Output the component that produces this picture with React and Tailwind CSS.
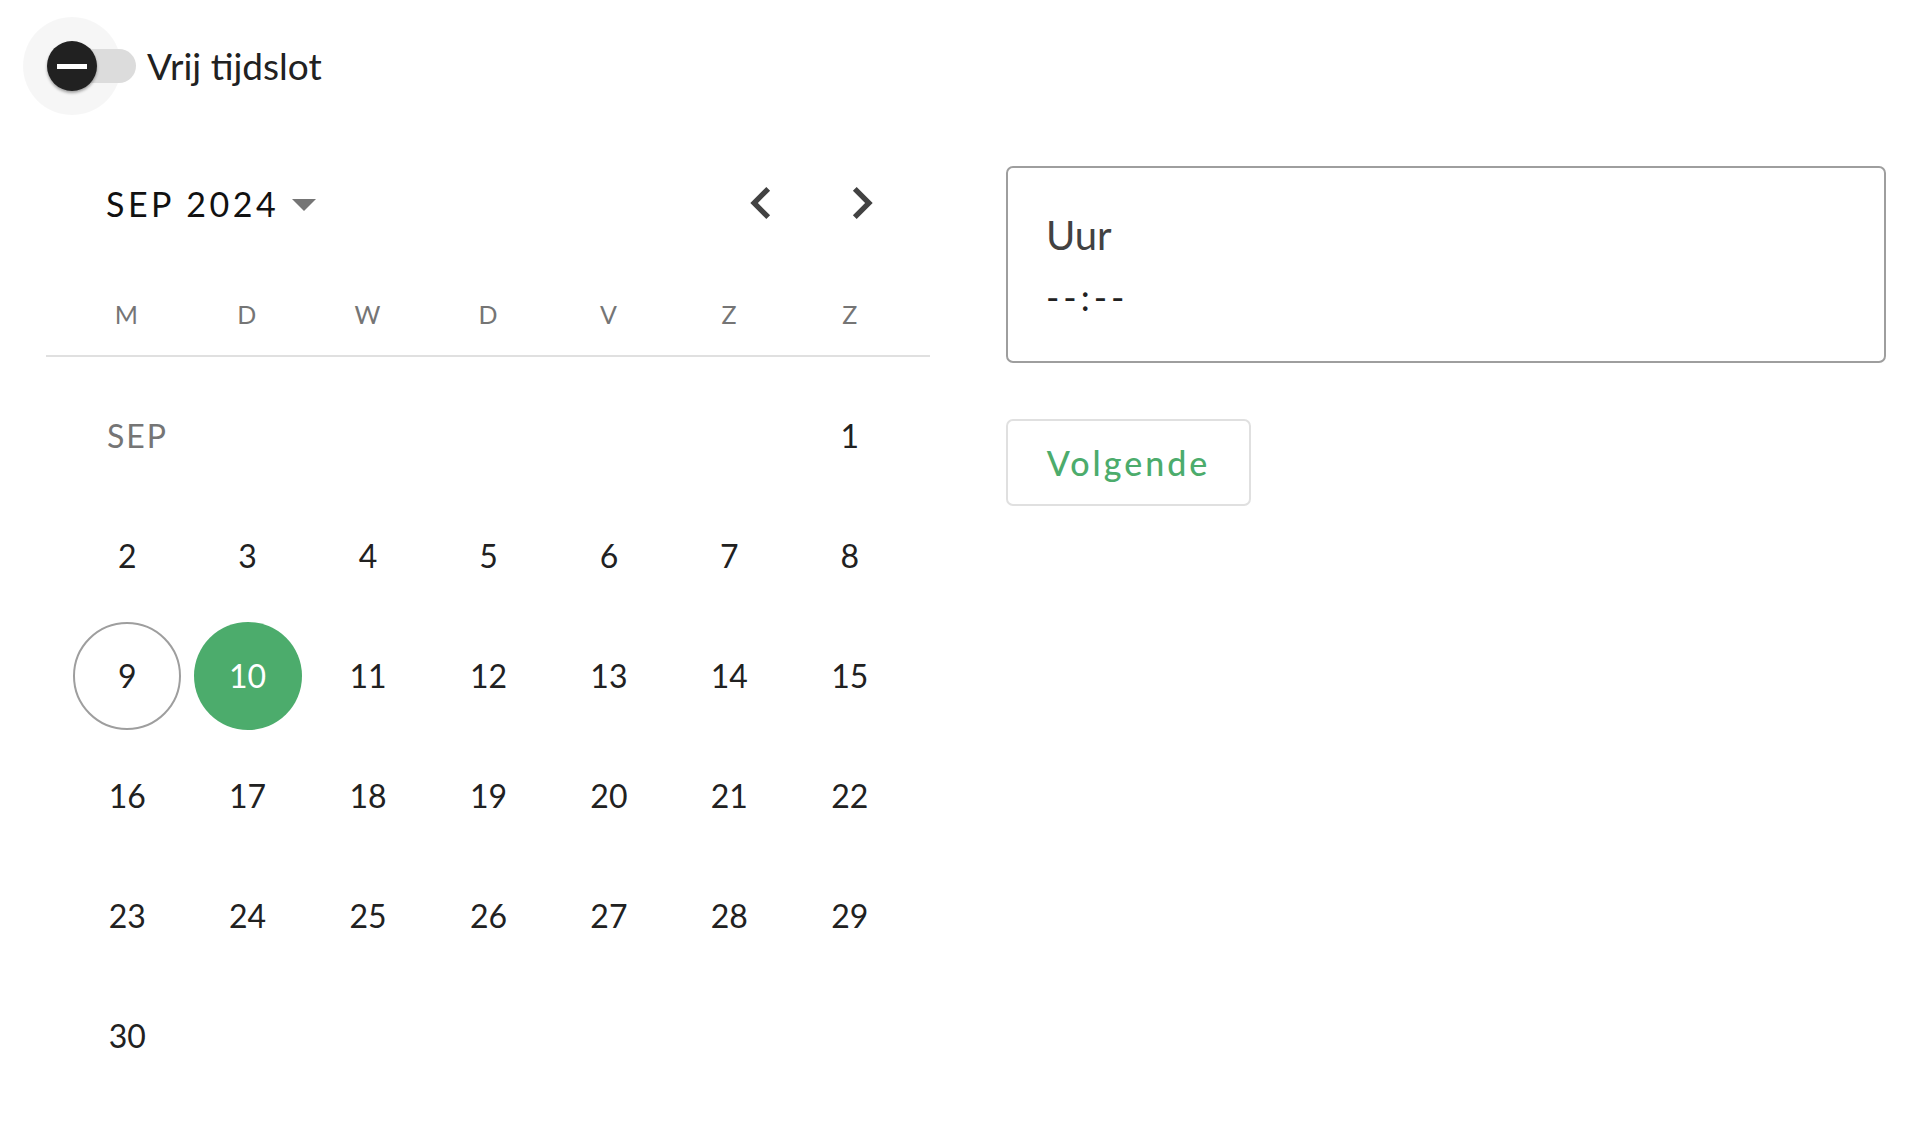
import React from 'react';

const WEEKDAYS = ['M', 'D', 'W', 'D', 'V', 'Z', 'Z'];

// rows after the first one (first row is "SEP" label + 1)
const ROWS = [
  [2, 3, 4, 5, 6, 7, 8],
  [9, 10, 11, 12, 13, 14, 15],
  [16, 17, 18, 19, 20, 21, 22],
  [23, 24, 25, 26, 27, 28, 29],
  [30],
];

const Chevron = ({ dir }) => (
  <svg width="64" height="64" viewBox="0 0 24 24">
    {dir === 'left' ? (
      <path d="M15.41 7.41L14 6l-6 6 6 6 1.41-1.41L10.83 12z" fill="#424242" />
    ) : (
      <path d="M10 6L8.59 7.41 13.17 12l-4.58 4.59L10 18l6-6z" fill="#424242" />
    )}
  </svg>
);

const DayCell = ({ day }) => {
  if (day === 9) {
    return (
      <div className="h-[120px] flex items-center justify-center">
        <div className="w-[108px] h-[108px] rounded-full border-2 border-[#9e9e9e] flex items-center justify-center text-[32px] text-[#212121]">
          {day}
        </div>
      </div>
    );
  }
  if (day === 10) {
    return (
      <div className="h-[120px] flex items-center justify-center">
        <div className="w-[108px] h-[108px] rounded-full bg-[#4cac6c] flex items-center justify-center text-[32px] text-white">
          {day}
        </div>
      </div>
    );
  }
  return (
    <div className="h-[120px] flex items-center justify-center text-[32px] text-[#212121]">
      {day}
    </div>
  );
};

export default function App() {
  return (
    <div className="min-h-screen bg-white font-['Lato','Liberation_Sans',sans-serif]">
      {/* toggle */}
      <div className="h-[132px] flex items-center pl-[23px]">
        <div className="relative w-[98px] h-[98px] shrink-0">
          <div className="absolute inset-0 rounded-full bg-black/[0.035]" />
          <div className="absolute left-[28px] top-[32px] w-[85px] h-[34px] rounded-full bg-[#dcdcdc]" />
          <div className="absolute left-[24px] top-[24px] w-[50px] h-[50px] rounded-full bg-[#212121] shadow-[0_2px_3px_rgba(0,0,0,0.35)] flex items-center justify-center">
            <div className="w-[30px] h-[5px] bg-white" />
          </div>
        </div>
        <span className="ml-[26px] text-[37px] text-[#212121]">Vrij tijdslot</span>
      </div>

      <div className="flex pt-[28px] pr-[30px]">
        {/* calendar */}
        <div className="w-[884px] ml-[46px] shrink-0">
          <div className="h-[86px] flex items-center justify-between pl-[60px] pr-[36px]">
            <div className="flex items-center">
              <span className="text-[34px] tracking-[3.5px] text-[#111]">SEP 2024</span>
              <svg width="26" height="14" viewBox="0 0 26 14" className="ml-[12px] mt-[4px]">
                <path d="M1 1 L25 1 L13 13 Z" fill="#757575" />
              </svg>
            </div>
            <div className="flex items-center gap-[37px]">
              <Chevron dir="left" />
              <Chevron dir="right" />
            </div>
          </div>

          <div className="pt-[52px] pb-[23px] border-b-2 border-[#e0e0e0] pl-[20px] pr-[20px] grid grid-cols-7">
            {WEEKDAYS.map((d, i) => (
              <div key={i} className="h-[34px] flex items-center justify-center text-[25px] text-[#757575]">
                {d}
              </div>
            ))}
          </div>

          <div className="pt-[19px] pl-[21px] pr-[20px] grid grid-cols-7">
            <div className="col-span-6 h-[120px] flex items-center pl-[40px] text-[32px] tracking-[2px] text-[#757575]">
              SEP
            </div>
            <DayCell day={1} />
            {ROWS.flat().map((d) => (
              <DayCell key={d} day={d} />
            ))}
          </div>
        </div>

        {/* time + next */}
        <div className="flex-1 ml-[76px] mt-[6px]">
          <div className="h-[197px] rounded-[7px] border-2 border-[#9e9e9e] pl-[38px] pt-[44px]">
            <div className="text-[40px] leading-[46px] text-[#424242]">Uur</div>
            <div className="mt-[19px] text-[36px] leading-[40px] text-[#212121] tracking-[4px]">--:--</div>
          </div>
          <button className="mt-[56px] w-[245px] h-[87px] rounded-[7px] border-2 border-[#e0e0e0] bg-white text-[34px] font-medium tracking-[3px] text-[#4cac6c]">
            Volgende
          </button>
        </div>
      </div>
    </div>
  );
}
